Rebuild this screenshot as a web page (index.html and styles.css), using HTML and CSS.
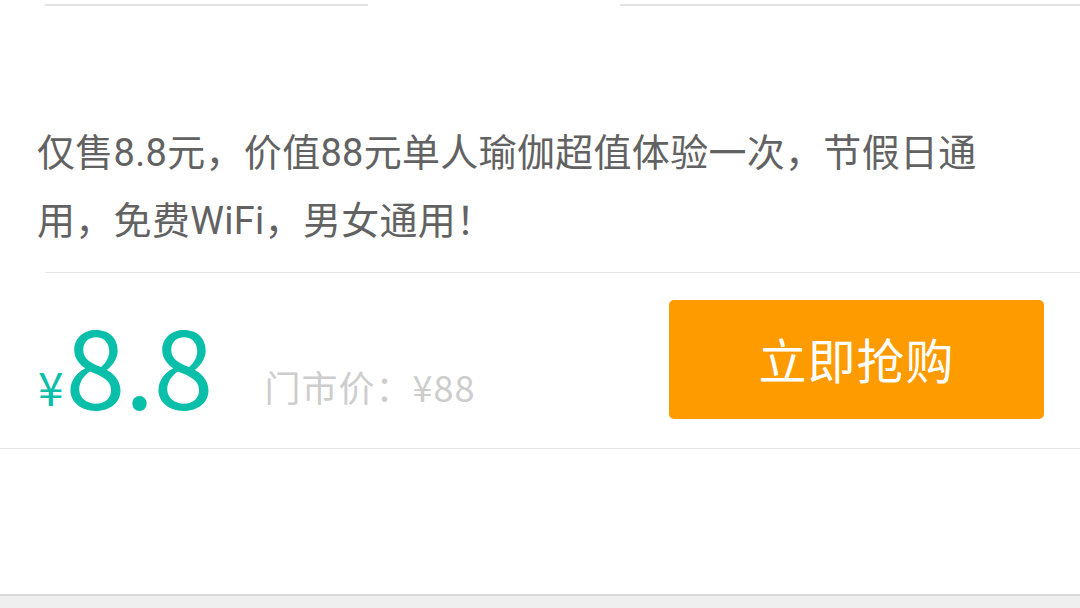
FILE: index.html
```html
<!DOCTYPE html>
<html lang="zh-CN">
<head>
<meta charset="utf-8">
<link rel="stylesheet" href="styles.css">
</head>
<body>
<div class="page">
  <div class="top-lines">
    <span class="tl tl-left"></span>
    <span class="tl tl-right"></span>
  </div>
  <p class="desc">仅售8.8元，价值88元单人瑜伽超值体验一次，节假日通<br>用，免费WiFi，男女通用！</p>
  <div class="sep"></div>
  <div class="buy-row">
    <div class="price">
      <span class="yen">¥</span><span class="now">8.8</span><span class="market">门市价：¥88</span>
    </div>
    <button class="buy-btn">立即抢购</button>
  </div>
  <div class="sep-full"></div>
  <div class="spacer"></div>
  <div class="bottom-bar"></div>
</div>
</body>
</html>
```

FILE: styles.css
```css
html, body {
  margin: 0;
  padding: 0;
  background: #ffffff;
}
.page {
  width: 1080px;
  height: 608px;
  overflow: hidden;
  display: flex;
  flex-direction: column;
  font-family: "Roboto", "Noto Sans CJK SC", sans-serif;
}
.top-lines {
  display: flex;
  height: 7px;
  padding-top: 4px;
  box-sizing: border-box;
  flex: none;
}
.tl {
  display: block;
  height: 2px;
  background: #e2e2e2;
}
.tl-left {
  margin-left: 45px;
  width: 323px;
}
.tl-right {
  margin-left: 252px;
  flex: 1;
}
.desc {
  margin: 112px 0 17px 0;
  padding: 0 0 0 37px;
  font-size: 38px;
  line-height: 68px;
  letter-spacing: 0.3px;
  color: #626262;
}
.sep {
  height: 1px;
  background: #e6e6e6;
  margin-left: 45px;
  flex: none;
}
.buy-row {
  display: flex;
  align-items: center;
  justify-content: space-between;
  height: 175px;
  padding: 0 36px 0 38px;
  flex: none;
}
.price {
  display: flex;
  align-items: baseline;
  margin-top: 8px;
  font-family: "Noto Sans CJK SC", "Roboto", sans-serif;
}
.yen {
  font-size: 46px;
  color: #0abfaa;
  line-height: 1;
  margin-right: 2px;
  transform: translateY(-4px);
}
.now {
  font-size: 108px;
  color: #0abfaa;
  line-height: 1;
  letter-spacing: -1px;
}
.market {
  font-size: 36px;
  color: #cdcdcd;
  margin-left: 52px;
  letter-spacing: 1px;
  transform: translateY(-8px);
}
.buy-btn {
  width: 375px;
  height: 119px;
  border: none;
  border-radius: 5px;
  background: #fe9b00;
  color: #ffffff;
  font-family: "Noto Sans CJK SC", "Noto Sans", sans-serif;
  font-size: 48px;
  letter-spacing: 1px;
  padding: 0 0 4px 0;
  margin-top: -2px;
}
.sep-full {
  height: 1px;
  background: #e6e6e6;
  flex: none;
}
.spacer {
  flex: 1;
}
.bottom-bar {
  height: 12px;
  border-top: 2px solid #d6d6d6;
  background: #efefef;
  flex: none;
}
```
